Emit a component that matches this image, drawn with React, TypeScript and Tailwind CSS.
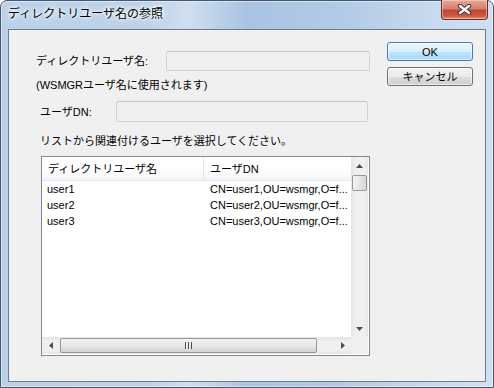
import React from "react";

const users = [
  { name: "user1", dn: "CN=user1,OU=wsmgr,O=f..." },
  { name: "user2", dn: "CN=user2,OU=wsmgr,O=f..." },
  { name: "user3", dn: "CN=user3,OU=wsmgr,O=f..." },
];

const Arrow = ({ dir }: { dir: "up" | "down" | "left" | "right" }) => {
  const pts = {
    up: "0,4 7,4 3.5,0",
    down: "0,0 7,0 3.5,4",
    left: "4,0 4,7 0,3.5",
    right: "0,0 0,7 4,3.5",
  }[dir];
  const vertical = dir === "up" || dir === "down";
  return (
    <svg width={vertical ? 7 : 4} height={vertical ? 4 : 7} viewBox={vertical ? "0 0 7 4" : "0 0 4 7"}>
      <polygon points={pts} fill="#4d4d4d" />
    </svg>
  );
};

const TextBox = ({ className }: { className: string }) => (
  <div className={`rounded-[2px] border border-[#d2d2d2] border-t-[#c4c4c4] bg-[#f0f0f0] ${className}`} />
);

export default function App() {
  return (
    <div className="h-[388px] w-[494px] font-['Liberation_Sans','Noto_Sans_CJK_JP',sans-serif] text-black">
      <div className="flex h-full w-full flex-col rounded-t-[7px] border border-[#485769] bg-[linear-gradient(90deg,#bbd1ea,#bcd2ea_30%,#cfdff0_38%,#a9c4e2_50%,#b2cbe6_70%,#c8daee_88%,#cfe0f2)] shadow-[inset_0_0_0_1px_rgba(255,255,255,0.45)]">
        {/* title bar */}
        <div className="flex h-[28px] items-start">
          <div className="pl-[7px] pt-[6px] text-[12px] leading-[15px] [text-shadow:0_0_5px_#fff,0_0_3px_#fff,0_0_8px_#fff]">
            ディレクトリユーザ名の参照
          </div>
          <div className="mr-[5px] -mt-px ml-auto flex h-[20px] w-[47px] items-center justify-center rounded-b-[4px] border border-t-0 border-[#6e2c22] bg-[linear-gradient(180deg,#e9a897,#d8806c_45%,#c24431_55%,#cf5a42_85%,#e49a80)] shadow-[inset_0_0_0_1px_rgba(255,230,220,0.45)]">
            <svg width="15" height="11" viewBox="0 0 15 11">
              <path d="M3 2 L12 9 M12 2 L3 9" stroke="#3a3a3a" strokeWidth="4.4" strokeLinecap="round" />
              <path d="M3 2 L12 9 M12 2 L3 9" stroke="#ffffff" strokeWidth="2.4" strokeLinecap="round" />
            </svg>
          </div>
        </div>

        {/* client */}
        <div className="mx-[7px] mb-[5px] flex flex-1 border border-[#6b7d93] bg-[#f0f0f0] pl-[27px] text-[11px] leading-[14px]">
          <div className="flex w-[336px] flex-col">
            <div className="mt-[21px] flex h-[20px] items-center">
              <span className="w-[130px]">ディレクトリユーザ名:</span>
              <TextBox className="h-[20px] w-[204px]" />
            </div>
            <div className="mt-[7px] flex h-[14px] items-center">(WSMGRユーザ名に使用されます)</div>
            <div className="mt-[9px] flex h-[21px] items-center">
              <span className="w-[80px] pl-[4px]">ユーザDN:</span>
              <TextBox className="h-[21px] w-[252px]" />
            </div>
            <div className="mt-[12px] flex h-[14px] items-center pl-[4px]">
              リストから関連付けるユーザを選択してください。
            </div>

            {/* list view */}
            <div className="ml-[5px] mt-[8px] flex h-[200px] w-[329px] flex-col border border-[#828790] bg-white">
              <div className="flex h-[180px]">
                <div className="flex w-[309px] flex-col">
                  <div className="flex h-[24px] border-b border-[#e3e6eb] bg-[linear-gradient(180deg,#ffffff,#ffffff_50%,#f4f5f7)]">
                    <div className="flex w-[162px] items-center border-r border-[#e2e4e8] pl-[6px]">ディレクトリユーザ名</div>
                    <div className="flex items-center pl-[6px]">ユーザDN</div>
                  </div>
                  {users.map((u) => (
                    <div key={u.name} className="flex h-[16px] items-center">
                      <div className="w-[162px] pl-[5px]">{u.name}</div>
                      <div className="whitespace-nowrap pl-[6px]">{u.dn}</div>
                    </div>
                  ))}
                </div>
                {/* vertical scrollbar */}
                <div className="flex w-[17px] flex-col bg-[linear-gradient(90deg,#e4e4e4,#efefef_25%,#f0f0f0_75%,#e6e6e6)]">
                  <div className="flex h-[17px] items-center justify-center pt-[1px]">
                    <Arrow dir="up" />
                  </div>
                  <div className="mx-[1px] mt-[1px] h-[16px] rounded-[2px] border border-[#979797] bg-[linear-gradient(90deg,#f3f3f3,#e6e6e6_50%,#d6d6d6)]" />
                  <div className="flex-1" />
                  <div className="flex h-[17px] items-center justify-center">
                    <Arrow dir="down" />
                  </div>
                </div>
              </div>
              {/* horizontal scrollbar */}
              <div className="flex h-[17px]">
                <div className="flex w-[309px] bg-[linear-gradient(180deg,#e4e4e4,#efefef_25%,#f0f0f0_75%,#e6e6e6)]">
                  <div className="flex w-[17px] items-center justify-center">
                    <Arrow dir="left" />
                  </div>
                  <div className="my-[1px] ml-[1px] flex w-[257px] items-center justify-center rounded-[2px] border border-[#979797] bg-[linear-gradient(180deg,#f3f3f3,#e8e8e8_50%,#d3d3d3)]">
                    <svg width="7" height="7" viewBox="0 0 7 7">
                      <rect x="0" y="0" width="1" height="7" fill="#4a4a4a" />
                      <rect x="1" y="0" width="1" height="7" fill="#f8f8f8" />
                      <rect x="3" y="0" width="1" height="7" fill="#4a4a4a" />
                      <rect x="4" y="0" width="1" height="7" fill="#f8f8f8" />
                      <rect x="6" y="0" width="1" height="7" fill="#4a4a4a" />
                    </svg>
                  </div>
                  <div className="flex-1" />
                  <div className="flex w-[17px] items-center justify-center">
                    <Arrow dir="right" />
                  </div>
                </div>
                <div className="w-[17px] bg-[#f0f0f0]" />
              </div>
            </div>
          </div>

          {/* buttons */}
          <div className="ml-[15px] flex flex-col gap-[6px] pt-[12px]">
            <button className="flex h-[19px] w-[86px] items-center justify-center rounded-[3px] border border-[#3c7fb1] bg-[linear-gradient(180deg,#eaf6fd,#d9f0fc_50%,#bee6fd_51%,#a7d9f5)] shadow-[inset_0_0_0_1px_rgba(255,255,255,0.6)]">
              OK
            </button>
            <button className="flex h-[19px] w-[86px] items-center justify-center rounded-[3px] border border-[#707070] bg-[linear-gradient(180deg,#f2f2f2,#ebebeb_50%,#dddddd_51%,#cfcfcf)] shadow-[inset_0_0_0_1px_rgba(255,255,255,0.6)]">
              キャンセル
            </button>
          </div>
        </div>
      </div>
    </div>
  );
}
